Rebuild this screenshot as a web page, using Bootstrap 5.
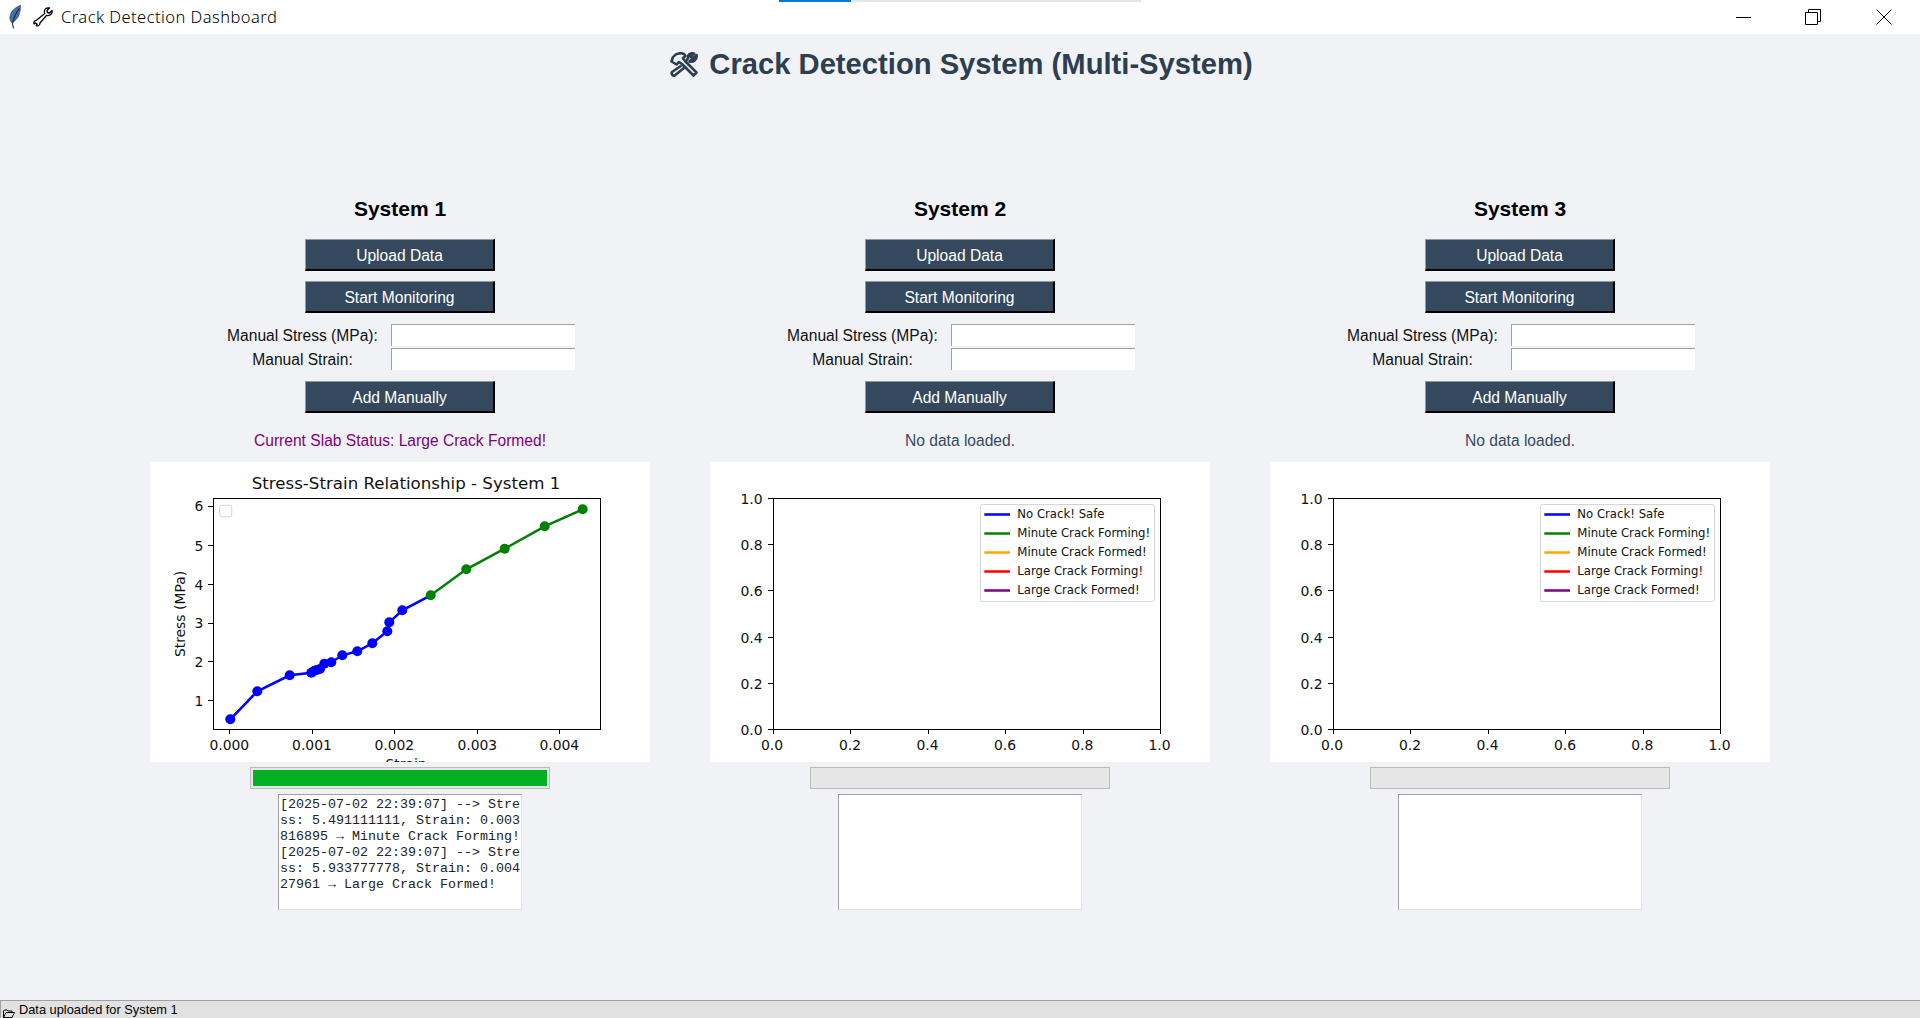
<!DOCTYPE html>
<html lang="en">
<head>
<meta charset="UTF-8">
<title>Crack Detection Dashboard</title>
<link href="https://cdn.jsdelivr.net/npm/bootstrap@5.3.0/dist/css/bootstrap.min.css" rel="stylesheet">
<style>
  body { background: #f0f2f5; font-family: "Liberation Sans", Arial, sans-serif; overflow: hidden; }
  .app-frame { height: 1018px; }
  .win-bar { height: 34px; background: #fff; position: relative; flex: none; }
  .feather-icon { margin-left: 8px; }
  .wrench-icon { margin-left: 12px; }
  .win-title { font-family: "Noto Sans", sans-serif; font-size: 16.5px; font-weight: 300; letter-spacing: .45px; color: #000; margin-left: 8px; line-height: 34px; margin-top: -1px; }
  .win-strip { position: absolute; left: 779px; top: 0; width: 362px; height: 2px; background: #e6e6e6; }
  .win-strip span { display: block; width: 72px; height: 2px; background: #0078d7; }
  .win-controls { margin-left: auto; margin-right: 1px; }
  .win-ctl { width: 71px; height: 34px; display: flex; align-items: center; justify-content: center; }
  .win-ctl:first-child { width: 67px; }
  .app-title { font-size: 29.2px; font-weight: 700; color: #2c3e50; margin: 10px 0 109px; padding-left: 3px; height: 40px; line-height: 40px; gap: 11px; }
  .sys-row { gap: 60px; }
  .sys-col { width: 500px; flex: none; }
  .sys-name { font-size: 21px; font-weight: 700; color: #000; line-height: 32px; height: 32px; margin: 0 0 14px; }
  .sys-btn { width: 190px; height: 32px; padding: 2px 0 0; border-radius: 0; font-size: 15.6px; line-height: 1; color: #fff; background: #34495e; border-width: 1px 2px 2px 1px; border-style: solid; border-color: #8d99a5 #000 #000 #8d99a5; }
  .sys-btn + .sys-btn { margin-top: 10px; }
  .manual-grid { display: grid; grid-template-columns: 155px 184px; column-gap: 11px; row-gap: 2px; margin: 11px 0; }
  .manual-grid label { font-size: 15.6px; text-align: center; color: #111; line-height: 24px; height: 22px; }
  .manual-input { height: 22px; border-radius: 0; padding: 0 2px; background: #fff; border-width: 1px 0 0 1px; border-style: solid; border-color: #a0a0a0; }
  .sys-status { font-size: 15.6px; line-height: 20px; margin: 18px 0 11px; color: #34495e; }
  .sys-status.is-large { color: #800080; }
  .chart-box { width: 500px; height: 300px; background: #fff; display: block; }
  .chart-box text { font-family: "DejaVu Sans", sans-serif; fill: #111; }
  .tick-x { font-size: 13.9px; text-anchor: middle; }
  .tick-y { font-size: 13.9px; text-anchor: end; }
  .legend-txt { font-size: 11.7px; }
  .sys-progress { width: 300px; height: 22px; margin: 5px 0; padding: 2px; border: 1px solid #bcbcbc; border-radius: 0; background: #e6e6e6; }
  .sys-progress .progress-bar { background: #06b025; }
  .log-box { width: 244px; height: 116px; background: #fff; border: 1px solid; border-color: #a0a0a0 #e3e3e3 #e3e3e3 #a0a0a0; font-family: "Liberation Mono", "Courier New", monospace; font-size: 13.33px; line-height: 16px; color: #222; padding: 2px 0 0 1px; white-space: nowrap; overflow: hidden; }
  .status-strip { height: 18px; flex: none; background: #e1e1e1; border-top: 1px solid #a0a0a0; border-left: 1px solid #a0a0a0; font-size: 12.8px; line-height: 17px; color: #000; overflow: hidden; padding-left: 2px; }
  .folder-icon { margin-right: 4px; }
</style>
</head>
<body>
<div class="app-frame d-flex flex-column">
  <div class="win-bar d-flex align-items-center">
    <svg class="feather-icon" width="13" height="24" viewBox="0 0 13 24">
      <path d="M12.500 .5C9 1.500 4 5 2.500 9.500 1.500 12.500 1.800 15 3.500 17.500 7 16.500 10 13 11 9.500 12 6.500 12.500 3.500 12.500 .5Z" fill="#3f6fb5" stroke="#4a5160" stroke-width=".9"/>
      <path d="M5.500 23.500 4.500 19C5.500 13 8 8 11.500 3" fill="none" stroke="#14181f" stroke-width="1"/>
    </svg>
    <svg class="wrench-icon" width="20" height="20" viewBox="0 0 20 20">
      <path d="M19 3.500 16.500 6 14.500 5.500 14 3.500 16.500 1C13.500 .2 11.300 2 11.300 5L11.800 6.500 3.500 13.300C1.500 13.500.5 15 1 16.800L2.700 16 4 17 3.500 18.800C5.500 19.300 7 18 7 16L13.500 8.300C16.800 9.300 19.800 7 19 3.500Z" fill="#fff" stroke="#000" stroke-width="1.300" stroke-linejoin="round"/>
    </svg>
    <span class="win-title">Crack Detection Dashboard</span>
    <div class="win-strip"><span></span></div>
    <div class="win-controls d-flex">
      <div class="win-ctl"><svg width="16" height="16" viewBox="0 0 16 16"><path d="M0 8.500H15" stroke="#000"/></svg></div>
      <div class="win-ctl"><svg width="16" height="16" viewBox="0 0 16 16"><path d="M.5 3.500H12.500V15.500H.5ZM3.500 3.500V.5H15.500V12.500H12.500" fill="none" stroke="#000"/></svg></div>
      <div class="win-ctl"><svg width="16" height="16" viewBox="0 0 16 16"><path d="M.5 .5 15.500 15.500M15.500 .5 .5 15.500" stroke="#000"/></svg></div>
    </div>
  </div>

  <main class="flex-grow-1">
    <h1 class="app-title d-flex justify-content-center align-items-center">
      <svg width="28" height="25" viewBox="0 0 28 25" fill="none" stroke="#2c3e50" stroke-width="2.600" stroke-linejoin="round">
        <path d="M1.500 9.500 3 5C6 1.500 10 .5 14 2L15.500 4 13 6 15 9 26.500 20.500 23.500 23.500 12 12 9 10 6.500 12.500Z"/>
        <path d="M26.500 3 23 6.500 20.500 4.500 24 1.500C20 .5 17.500 3 18 6.500L16 9M11.500 13.500 2 20C.8 22 3 24.500 5 23.300L14.500 15.500M19.500 9.500C23 10.500 27.500 8 26.500 3Z"/>
      </svg>
      <span>Crack Detection System (Multi-System)</span>
    </h1>

    <div class="sys-row d-flex justify-content-center">
      <!-- system 1 -->
      <section class="sys-col d-flex flex-column align-items-center">
        <h2 class="sys-name">System 1</h2>
        <button class="btn sys-btn">Upload Data</button>
        <button class="btn sys-btn">Start Monitoring</button>
        <div class="manual-grid">
          <label for="stress1">Manual Stress (MPa):</label><input id="stress1" class="manual-input">
          <label for="strain1">Manual Strain:</label><input id="strain1" class="manual-input">
        </div>
        <button class="btn sys-btn">Add Manually</button>
        <div class="sys-status is-large">Current Slab Status: Large Crack Formed!</div>
        <svg class="chart-box" viewBox="0 0 500 300">
          <text x="256" y="27" font-size="16.67" text-anchor="middle">Stress-Strain Relationship - System 1</text>
          <rect x="69.700" y="43.300" width="12" height="11.500" rx="2" fill="#fff" stroke="#d5d5d5"/>
          <polyline fill="none" stroke="#00f" stroke-width="2.500" points="80.300,257.300 107.300,229.300 139.700,213.300 161.300,210.700 164,209 166.700,208 170,207 174.300,201.700 181.300,200.300 192.300,193.300 207.300,189.300 222.300,181.300 237.300,169.300 239.300,160.300 252.300,148.300 280.700,133.300"/>
          <g fill="#00f">
            <circle cx="80.300" cy="257.300" r="5"/><circle cx="107.300" cy="229.300" r="5"/><circle cx="139.700" cy="213.300" r="5"/><circle cx="161.300" cy="210.700" r="5"/><circle cx="164" cy="209" r="5"/><circle cx="166.700" cy="208" r="5"/><circle cx="170" cy="207" r="5"/><circle cx="174.300" cy="201.700" r="5"/><circle cx="181.300" cy="200.300" r="5"/><circle cx="192.300" cy="193.300" r="5"/><circle cx="207.300" cy="189.300" r="5"/><circle cx="222.300" cy="181.300" r="5"/><circle cx="237.300" cy="169.300" r="5"/><circle cx="239.300" cy="160.300" r="5"/><circle cx="252.300" cy="148.300" r="5"/>
          </g>
          <polyline fill="none" stroke="#008000" stroke-width="2.500" points="280.700,133.300 316.300,107.300 354.700,86.700 394.700,64.300 432.700,47.300"/>
          <g fill="#008000">
            <circle cx="280.700" cy="133.300" r="5"/><circle cx="316.300" cy="107.300" r="5"/><circle cx="354.700" cy="86.700" r="5"/><circle cx="394.700" cy="64.300" r="5"/><circle cx="432.700" cy="47.300" r="5"/>
          </g>
          <rect x="63.500" y="36.500" width="387" height="231" fill="none" stroke="#000"/>
          <path d="M79.500 267V272M162.500 267V272M244.500 267V272M327.500 267V272M409.500 267V272M58 44.500H63M58 83.500H63M58 122.500H63M58 161.500H63M58 199.500H63M58 238.500H63" stroke="#000"/>
          <text class="tick-x" x="79.300" y="288">0.000</text><text class="tick-x" x="162" y="288">0.001</text><text class="tick-x" x="244.300" y="288">0.002</text><text class="tick-x" x="327.300" y="288">0.003</text><text class="tick-x" x="409.300" y="288">0.004</text>
          <text class="tick-y" x="53.300" y="49">6</text><text class="tick-y" x="53.300" y="88.500">5</text><text class="tick-y" x="53.300" y="127.500">4</text><text class="tick-y" x="53.300" y="166">3</text><text class="tick-y" x="53.300" y="205">2</text><text class="tick-y" x="53.300" y="243.500">1</text>
          <text x="256" y="307" font-size="13.900" text-anchor="middle">Strain</text>
          <text font-size="13.900" text-anchor="middle" transform="translate(35 152) rotate(-90)">Stress (MPa)</text>
        </svg>
        <div class="progress sys-progress"><div class="progress-bar" style="width:100%"></div></div>
        <div class="log-box">[2025-07-02 22:39:07] --&gt; Stre<br>ss: 5.491111111, Strain: 0.003<br>816895 → Minute Crack Forming!<br>[2025-07-02 22:39:07] --&gt; Stre<br>ss: 5.933777778, Strain: 0.004<br>27961 → Large Crack Formed!</div>
      </section>

      <!-- system 2 -->
      <section class="sys-col d-flex flex-column align-items-center">
        <h2 class="sys-name">System 2</h2>
        <button class="btn sys-btn">Upload Data</button>
        <button class="btn sys-btn">Start Monitoring</button>
        <div class="manual-grid">
          <label for="stress2">Manual Stress (MPa):</label><input id="stress2" class="manual-input">
          <label for="strain2">Manual Strain:</label><input id="strain2" class="manual-input">
        </div>
        <button class="btn sys-btn">Add Manually</button>
        <div class="sys-status">No data loaded.</div>
        <svg class="chart-box" viewBox="0 0 500 300">
          <rect x="63.500" y="36.500" width="387" height="231" fill="none" stroke="#000"/>
          <path d="M63.500 267V272M140.500 267V272M218.500 267V272M295.500 267V272M373.500 267V272M450.500 267V272M58 36.500H63M58 82.500H63M58 128.500H63M58 175.500H63M58 221.500H63M58 267.500H63" stroke="#000"/>
          <text class="tick-x" x="62" y="288">0.0</text><text class="tick-x" x="140" y="288">0.2</text><text class="tick-x" x="217.500" y="288">0.4</text><text class="tick-x" x="295" y="288">0.6</text><text class="tick-x" x="372.300" y="288">0.8</text><text class="tick-x" x="449.500" y="288">1.0</text>
          <text class="tick-y" x="52.500" y="42">1.0</text><text class="tick-y" x="52.500" y="88">0.8</text><text class="tick-y" x="52.500" y="134">0.6</text><text class="tick-y" x="52.500" y="180.500">0.4</text><text class="tick-y" x="52.500" y="226.500">0.2</text><text class="tick-y" x="52.500" y="272.500">0.0</text>
          <rect x="270.500" y="42.500" width="174" height="97" rx="2" fill="#fff" stroke="#d5d5d5"/>
          <path d="M274.300 52.500H300" stroke="#00f" stroke-width="2.500"/><path d="M274.300 71.500H300" stroke="#008000" stroke-width="2.500"/><path d="M274.300 90.500H300" stroke="#ffa500" stroke-width="2.500"/><path d="M274.300 109.500H300" stroke="#f00" stroke-width="2.500"/><path d="M274.300 128.500H300" stroke="#800080" stroke-width="2.500"/>
          <text class="legend-txt" x="307.300" y="55.500">No Crack! Safe</text><text class="legend-txt" x="307.300" y="74.500">Minute Crack Forming!</text><text class="legend-txt" x="307.300" y="93.500">Minute Crack Formed!</text><text class="legend-txt" x="307.300" y="112.500">Large Crack Forming!</text><text class="legend-txt" x="307.300" y="131.500">Large Crack Formed!</text>
        </svg>
        <div class="progress sys-progress"><div class="progress-bar" style="width:0%"></div></div>
        <div class="log-box"></div>
      </section>

      <!-- system 3 -->
      <section class="sys-col d-flex flex-column align-items-center">
        <h2 class="sys-name">System 3</h2>
        <button class="btn sys-btn">Upload Data</button>
        <button class="btn sys-btn">Start Monitoring</button>
        <div class="manual-grid">
          <label for="stress3">Manual Stress (MPa):</label><input id="stress3" class="manual-input">
          <label for="strain3">Manual Strain:</label><input id="strain3" class="manual-input">
        </div>
        <button class="btn sys-btn">Add Manually</button>
        <div class="sys-status">No data loaded.</div>
        <svg class="chart-box" viewBox="0 0 500 300">
          <rect x="63.500" y="36.500" width="387" height="231" fill="none" stroke="#000"/>
          <path d="M63.500 267V272M140.500 267V272M218.500 267V272M295.500 267V272M373.500 267V272M450.500 267V272M58 36.500H63M58 82.500H63M58 128.500H63M58 175.500H63M58 221.500H63M58 267.500H63" stroke="#000"/>
          <text class="tick-x" x="62" y="288">0.0</text><text class="tick-x" x="140" y="288">0.2</text><text class="tick-x" x="217.500" y="288">0.4</text><text class="tick-x" x="295" y="288">0.6</text><text class="tick-x" x="372.300" y="288">0.8</text><text class="tick-x" x="449.500" y="288">1.0</text>
          <text class="tick-y" x="52.500" y="42">1.0</text><text class="tick-y" x="52.500" y="88">0.8</text><text class="tick-y" x="52.500" y="134">0.6</text><text class="tick-y" x="52.500" y="180.500">0.4</text><text class="tick-y" x="52.500" y="226.500">0.2</text><text class="tick-y" x="52.500" y="272.500">0.0</text>
          <rect x="270.500" y="42.500" width="174" height="97" rx="2" fill="#fff" stroke="#d5d5d5"/>
          <path d="M274.300 52.500H300" stroke="#00f" stroke-width="2.500"/><path d="M274.300 71.500H300" stroke="#008000" stroke-width="2.500"/><path d="M274.300 90.500H300" stroke="#ffa500" stroke-width="2.500"/><path d="M274.300 109.500H300" stroke="#f00" stroke-width="2.500"/><path d="M274.300 128.500H300" stroke="#800080" stroke-width="2.500"/>
          <text class="legend-txt" x="307.300" y="55.500">No Crack! Safe</text><text class="legend-txt" x="307.300" y="74.500">Minute Crack Forming!</text><text class="legend-txt" x="307.300" y="93.500">Minute Crack Formed!</text><text class="legend-txt" x="307.300" y="112.500">Large Crack Forming!</text><text class="legend-txt" x="307.300" y="131.500">Large Crack Formed!</text>
        </svg>
        <div class="progress sys-progress"><div class="progress-bar" style="width:0%"></div></div>
        <div class="log-box"></div>
      </section>
    </div>
  </main>

  <div class="status-strip d-flex">
    <svg class="folder-icon mt-auto" width="12" height="9" viewBox="0 0 12 9"><path d="M.5 8.500V2L1.500 1H4L5 2H9V3.500M.5 8.500 3 3.500H11.500L9 8.500Z" fill="#e1e1e1" stroke="#000"/></svg>
    <span>Data uploaded for System 1</span>
  </div>
</div>
<script src="https://cdn.jsdelivr.net/npm/bootstrap@5.3.0/dist/js/bootstrap.bundle.min.js"></script>
</body>
</html>
